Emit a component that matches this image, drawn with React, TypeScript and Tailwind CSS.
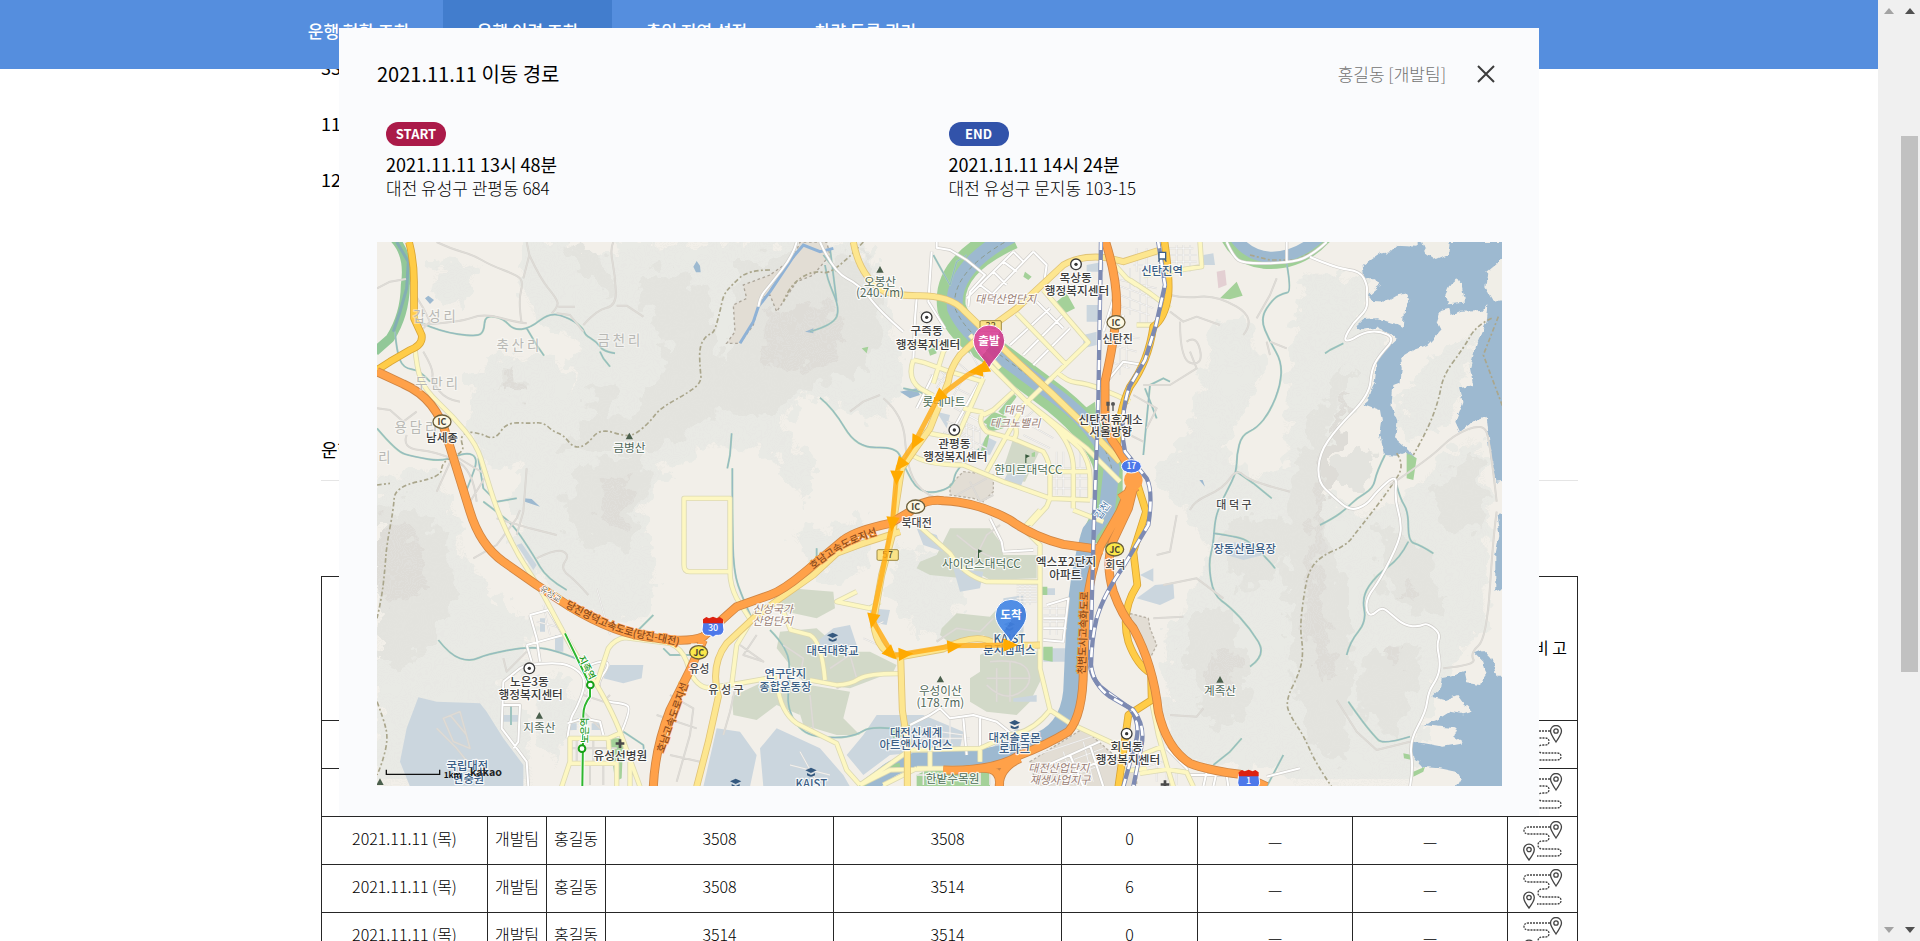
import React from "react";

type Pt = [number, number];

const ROADS: { kind: string; d: string[] }[] = [
  {
    kind: "lane",
    d: [
      "M21 160L60 140L108 132", "M200 21L240 40L310 60L360 90L440 120L460 140L445 200L455 265",
      "M460 130L478 60L470 21", "M478 60L510 130L560 190L565 215L545 235", "M565 215L615 215",
      "M140 270L270 262L340 235L440 262L470 265", "M560 235L600 240L640 290", "M640 270L680 225L740 212L735 120L720 40L730 21",
      "M740 212L770 212L820 245", "M21 520L60 525L100 560L140 530", "M110 600L95 640L200 650L310 700L320 800",
      "M160 350L190 400L185 440L230 495L270 500", "M130 170L160 220L180 260L150 290",
      "M200 770L250 660L350 720L300 800",
      "M470 700L460 830L440 900", "M310 970L380 930L440 850L450 825", "M380 850L480 880L560 900",
      "M500 970L560 940L600 960L570 1000L620 1040L655 1080",
      "M2400 180L2440 190L2540 180L2660 250L2620 300", "M2660 250L2700 180L2720 130",
      "M2400 230L2440 260L2480 245L2550 270", "M2430 260L2430 380L2500 390L2480 300L2450 320",
      "M2320 450L2400 450L2480 400L2460 350", "M2690 320L2700 360", "M2700 320L2750 340",
      "M2290 480L2360 520L2330 580", "M2280 600L2320 620",
      "M2460 825L2470 800L2560 760L2600 700L2640 740L2760 770",
      "M3060 750L3180 670L3250 600L3340 565L3360 620L3380 800",
      "M2360 960L2400 950L2420 840", "M2380 1050L2480 1030L2560 1090",
      "M2350 1150L2440 1145", "M3380 830L3370 900L3350 1210L3300 1255L3320 1290L3220 1300",
      "M2900 1395L2960 1490L3020 1545L3120 1520", "M2400 1440L2480 1445L2500 1420",
      "M900 1380L970 1420L960 1500L920 1640", "M860 1440L980 1480", "M900 1560L990 1580",
      "M1100 1340L1080 1430L1060 1500", "M1110 1230L1180 1280L1120 1260L1160 1200",
      "M1240 1230L1300 1270L1290 1330", "M1380 1300L1440 1260L1460 1330L1400 1360", "M1320 1380L1330 1480",
      "M1700 1220L1760 1180L1830 1190L1870 1150", "M1860 1280L1960 1270L1990 1350L1900 1400L1850 1350",
      "M1880 1300L1880 1400", "M1920 1280L1920 1400", "M1850 1330L1980 1330",
      "M1760 900L1810 940L1850 960L1900 980", "M1800 1000L1850 900L1890 870",
      "M220 1450L270 1430L300 1540L250 1520ZM200 1480L260 1540L300 1590M240 1440L290 1500",
      "M400 1270L410 1310L470 1250", "M640 1380L700 1400L720 1380", "M640 1430L690 1480",
      "M600 1540H740M620 1510V1580M670 1510V1580M700 1590V1650M660 1590V1650",
      "M1540 490L1600 540L1610 690L1650 770L1700 790", "M1530 480L1480 500L1440 530",
      "M1800 740L1830 800L1870 780", "M1760 780L1850 730",
    ],
  },
  {
    kind: "fine",
    d: [
      "M1680 420L1800 480M1700 390L1740 440M1740 400L1700 460M1780 430L1740 500M1720 500L1830 560",
      "M1760 380L1840 450M1800 350L1840 420M1780 560L1820 580M1770 590L1810 610M1790 540L1850 570",
      "M1730 560L1830 590M1720 590L1780 620M1650 230L1720 330M1640 300H1720",
      "M2060 650V780M2080 650V780M2040 700H2160M2040 730H2160M2050 760H2160M2110 800V690M2130 650V790",
      "M1960 600L2040 640M1980 570L2050 610M1940 570L2000 520", "M2230 130L2360 160M2240 150L2350 190M2250 180L2350 220M2240 210L2340 240M2280 100V240M2310 100V260M2330 110V270",
      "M2230 300L2310 310M2220 330L2300 350M2220 380L2280 400M2270 300V400M2250 300V420",
      "M2390 40H2470M2400 60H2480M2400 80H2480M2420 30V110M2440 30V110M2460 30V110M2290 60H2370M2290 90H2380M2300 40V110M2330 40V110",
      "M1940 1050H2000M1940 1060H2000M1940 1070H2000M1940 1080H2000M1940 1090H2000M1940 1100H2000M1950 1050V1110M1965 1050V1110M1980 1050V1110",
      "M2020 1120H2090M2020 1140H2090M2020 1160H2090M2020 1180H2090M2040 1110V1200M2060 1110V1200",
      "M1480 1210L1570 1250M1500 1180L1540 1160M1770 600L1850 640M1760 620L1830 650M1790 560V640M1810 570V650M1830 580V660",
      "M680 1060L720 1200M690 1180H760M500 1160L580 1180M520 1110L540 1200M640 1340L660 1400M2000 1560L2180 1500M2040 1600L2200 1540M2060 1640L2220 1580M2080 1550L2110 1650M2140 1520L2170 1640",
      "M2390 1590V1640M2420 1610V1650M2360 1560V1640M2310 1600L2380 1580",
      "M1700 1470V1540M1740 1450V1540M1640 1480L1780 1500M1640 1510H1800M1260 1590L1380 1620M1290 1550L1340 1640",
      "M1640 1600H1700M1640 1620H1700M1660 1600V1650M1830 1600V1650M1860 1600V1650",
    ],
  },
  {
    kind: "white",
    d: [
      "M2570 21L2590 65L2620 86L2750 84L2820 66L2870 21", "M2750 21V85", "M2690 1625L2790 1600",
      "M2820 66L2900 100L2970 108L2992 150L2990 180L2993 222L2950 262L2920 315L2940 318L2980 292L3030 288L3075 310L3030 360L3005 400L2998 480L2900 580L2848 655L2843 740L2890 785L2940 828L2990 810L3020 770L3082 715L3074 790L3094 860L3090 915L3030 1035L2992 1085L2988 1125L3003 1145L3035 1115L3060 1135L3104 1172L3150 1175L3170 1163L3212 1195L3200 1230L3211 1280L3205 1325L3175 1370L3168 1430L3118 1520L3130 1600L3120 1655",
      "M1700 21V38L1740 45L1790 75L1845 120L1800 170L1795 215", "M1685 50L1675 200L1725 280",
      "M1280 21L1270 60L1200 150L1170 185L1165 215", "M1350 21L1390 110L1470 150L1530 230L1600 290",
      "M1640 190L1635 250L1630 375", "M1930 50L1790 190", "M1990 50L1860 185", "M1930 50L1960 80",
      "M1900 80L1940 110M1870 110L1910 150M1830 150L1870 180M1990 50L2030 90L2020 160",
      "M2080 240L1960 360M2040 220L1920 330M2100 280L1990 390M2000 200L2080 280",
      "M1690 420L1640 520M1840 420L1740 600", "M2210 440L2260 380L2320 390",
      "M2030 1110L2095 1090L2080 1220L2020 1215M2020 1150H2090M2020 1180H2085",
      "M1860 850L1895 920L1900 950L1990 945", "M480 1140L535 1125L580 1200L640 1300M480 1140L500 1210L510 1280M470 1230L580 1200M470 1230L485 1280",
      "M475 1290L560 1280L620 1300L650 1340L620 1420L600 1450L592 1510", "M400 1340L395 1480L470 1580L475 1655M400 1340L450 1300L480 1285M395 1410H450L445 1520L430 1540",
      "M592 1465L640 1450L690 1460L700 1500", "M660 1290L700 1275L720 1290L680 1345L700 1400L760 1405L785 1420L755 1490",
      "M1620 1470L1680 1440L1710 1420L1740 1450L1810 1440L1880 1460L1930 1500M1780 1450L1790 1560M1830 1450L1830 1540",
      "M2390 1540L2450 1600L2460 1640M2450 1620H2600M2510 1610L2500 1655M2540 1610L2530 1655M2570 1620L2575 1655",
      "M2010 1600L2190 1520M2030 1650L2230 1560M2100 1560L2140 1655M2160 1530L2200 1655", "M2240 160L2200 290M2260 240L2220 330",
    ],
  },
  {
    kind: "pale",
    d: [
      "M134 330L140 400L165 465L250 545L320 630L345 710L380 825L440 955L510 1060L560 1155L620 1265L680 1345L740 1460L775 1560L810 1655",
      "M1080 1010H958Q942 1010 942 990V790H1080V1010Q1080 1050 1100 1090L1145 1160",
      "M680 1345L715 1240Q735 1212 765 1208L900 1225Q935 1240 950 1280Q970 1350 1010 1358L1080 1350L1220 1325",
      "M575 1655L600 1580V1510H715L755 1492M600 1585H740V1655M715 1510L720 1585M780 1580V1655",
      "M1085 1350L1100 1230L1160 1130", "M1222 1345Q1230 1430 1280 1465L1400 1525L1430 1605L1470 1650",
      "M1230 1105L1262 1185L1320 1200Q1355 1220 1365 1335M1320 1335L1400 1350Q1440 1350 1470 1330Q1500 1315 1590 1316",
      "M1650 875L1740 955Q1780 1020 1850 1040L2010 1041",
      "M2010 825L1960 880L2010 930V1300L2040 1425Q1990 1490 1920 1500L1830 1540L1620 1545L1470 1650",
      "M2040 1425L2100 1465L2240 1530", "M1470 1650L1560 1605L1700 1600", "M1680 1550V1600M1830 1540V1580M1640 1600H1900",
      "M1640 1600L1540 1650", "M1940 235L2090 390M2020 165L2155 322L1960 512L1850 710",
      "M1630 375L1660 382L1740 410L1840 440M1630 375Q1610 430 1650 460L1690 482M1690 445L1720 350L1740 325L1630 330",
      "M1850 380L1970 500L2060 580Q2110 640 2110 700V820M2040 560L2130 640Q2160 680 2160 730V790",
      "M1780 520L1840 532M1840 530Q1820 560 1850 590L1930 612Q1945 600 1935 570M1840 540L1870 525L1930 470M1930 612L2020 650Q2040 680 2040 720V790L2160 795M2040 710H2160",
      "M1650 590L1760 610L1840 430M1620 655Q1660 690 1780 690L1900 740L2040 790L2030 815L1980 870",
      "M2060 410L2090 440L2150 445L2240 480L2280 500", "M2280 135L2340 175L2400 220M2490 21L2495 95L2320 122",
      "M2230 85L2270 130L2300 150M2300 270H2350", "M2345 1400L2365 1500L2390 1590L2410 1655",
      "M2310 1615L2390 1603L2450 1612L2470 1655M2300 1565L2375 1535M2250 1610L2330 1600",
      "M1970 500L2150 640L2250 740M1890 400L1800 300", "M1460 1070L1400 1100L1500 1120L1530 1100", "M2110 825L2200 860",
    ],
  },
  {
    kind: "light",
    d: [
      "M1450 21Q1470 130 1545 170Q1580 182 1640 182Q1740 180 1780 225L1920 360L2045 475L2165 590L2250 680",
      "M2370 45L2260 80L2210 68Q2130 60 2080 90L1940 220L1850 285L1770 360Q1740 400 1735 440L1680 580L1630 650L1595 700L1575 830L1570 890L1535 1020L1510 1160Q1520 1260 1595 1265L1720 1242Q1800 1200 1850 1215Q1890 1235 2010 1230",
      "M980 1655L1015 1520L1045 1385Q1020 1290 1070 1225L1150 1150L1230 1090L1330 1020L1400 955L1480 925L1590 890",
      "M1592 1265L1597 1425L1612 1525V1655",
    ],
  },
  {
    kind: "gold",
    d: [
      "M117 21Q133 80 132 150V250L155 300Q160 330 120 345L60 380L21 405",
      "M2382 10Q2400 130 2395 180Q2385 250 2350 275Q2335 380 2280 455Q2245 530 2240 640",
      "M2300 740L2328 830L2290 950L2302 1050Q2250 1130 2275 1220Q2300 1290 2343 1315L2345 1395L2275 1440L2255 1585L2245 1655",
    ],
  },
  {
    kind: "highway",
    d: [
      "M21 410L100 447Q200 490 232 610L300 830Q330 930 400 980L500 1050L600 1115Q740 1200 850 1208Q950 1225 1000 1205Q1060 1150 1100 1115L1200 1080Q1240 1065 1300 1015L1420 915Q1460 885 1560 865L1620 830Q1660 790 1720 797Q1820 800 1920 855Q1990 905 2080 928L2200 945",
      "M2205 15Q2242 130 2240 220Q2235 310 2205 440V540Q2210 600 2240 635L2295 725Q2275 770 2250 830L2190 935Q2160 1020 2152 1100L2140 1300Q2140 1440 2095 1490Q2030 1530 1950 1560Q1870 1610 1720 1605",
      "M2295 740L2275 820L2228 920Q2205 990 2230 1070Q2255 1140 2290 1180Q2350 1290 2365 1430Q2390 1540 2460 1585Q2510 1605 2610 1618L2690 1655",
      "M2250 790L2300 755M1000 1215L960 1305L900 1425Q855 1540 850 1655",
      "M1840 1600Q1895 1600 1888 1655M1950 1570Q1885 1600 1888 1655",
    ],
  },
];

const ROAD_STYLE: Record<string, [string, number, string, number]> = {
  lane: ["#d6d4cf", 6, "#dedbd6", 4],
  fine: ["#d9d7d3", 5, "#ffffff", 2],
  white: ["#cfcdc9", 10, "#ffffff", 6],
  pale: ["#dcd9b4", 16, "#fdf7c2", 11],
  light: ["#e0c478", 21, "#fde68f", 16],
  gold: ["#d9a536", 23, "#ffcc47", 18],
  highway: ["#cf8544", 27, "#ffa149", 22],
};

const HILLS_LOW = [
  "M480 21L560 21L700 60L860 21L1480 21L1540 120L1600 420L1550 560L1300 480L1240 560L1340 700L1300 800L1180 640L1000 640L880 700L820 830L860 1020L820 1160L700 1150L560 1080L460 960L430 800L460 700L340 690L300 540L300 430L380 360L560 370L620 470L600 380L640 330L500 260L440 140Z",
  "M200 80L320 90L310 140L270 220L180 170Z",
  "M21 720L200 700L260 830L290 960L380 1080L480 1150L470 1300L380 1360L480 1480L490 1655L21 1655Z",
  "M2800 110L2990 130L2960 240L3060 330L2990 480L2850 660L2850 760L2960 830L3080 800L3300 600L3330 620L3360 830L3340 1180L3250 1290L3180 1400L3120 1655L2780 1655L2720 1600L2440 1580L2390 1440L2380 1200L2440 1120L2520 960L2450 840L2350 720L2440 640L2540 260L2640 260L2680 420L2560 640L2640 720L2760 700L2740 560Z",
  "M3100 480L3180 380L3320 280L3290 460L3240 560L3120 620L3080 540Z",
  "M1260 900L1480 850L1500 1000L1380 1060ZM1600 920L1700 960L1780 1080L1740 1200L1620 1200L1560 1050Z",
  "M660 1460L580 1500L560 1600L500 1500L500 1320L560 1300Z",
];
const HILLS_MID = [
  "M1100 70L1500 60L1540 260L1480 420L1360 440L1180 540L1040 520L1080 350Z",
  "M860 90L1000 150L1040 330L1100 460L1000 560L840 660L640 640L560 640L640 560L820 520L900 360L800 160Z",
  "M640 690L820 640L830 760L760 940L620 920L580 800Z",
  "M580 21L660 40L730 130L700 170L620 100ZM370 450L400 400L480 450L460 490ZM640 460L720 460L740 560L680 560Z",
  "M21 840L110 800L200 880L260 1060L200 1200L110 1300L21 1260Z",
  "M2890 430L2940 400L2900 520L2860 600L2850 800L2900 1000L2960 1300L2900 1600L2820 1500L2760 1280L2740 960L2780 700L2820 560Z",
  "M2480 1140L2560 1100L2640 1300L2620 1450L2540 1480L2440 1300Z",
  "M2560 850L2760 860L2720 1040L2600 1050L2560 950Z",
  "M3020 880L3160 920L3220 1120L3120 1140L3040 1040ZM2980 1260L3140 1220L3160 1320L3060 1500L2960 1400Z",
  "M2860 700L2990 620L3020 700L2960 780ZM3190 760L3320 640L3340 900L3220 880Z",
];
const HILLS_HIGH = [
  "M1200 220L1380 200L1440 330L1280 420L1160 380ZM700 740L780 740L760 860L680 860ZM390 440L440 410L470 480L420 480Z",
  "M2910 500L2940 470L2860 840L2860 1100L2900 1280L2860 1340L2800 1200L2820 900L2840 700Z",
  "M2520 1230L2600 1260L2580 1400L2520 1360ZM3040 1240L3100 1240L3080 1300Z",
  "M21 880L90 860L180 960L160 1080L60 1100L21 1060ZM3080 1080L3140 1040L3150 1090Z",
];
const STREAMS = [
  "M150 262L210 290L320 305L342 290L345 240L400 250L430 285L480 280L540 232L600 250L640 280L645 300L680 320L700 350L735 355",
  "M470 280L500 330L522 362", "M690 350L700 370L720 395", "M75 290L80 350L100 400L150 405L180 440",
  "M21 580L80 650L130 665L220 680L290 650L325 670L300 740L280 790", "M325 670L340 760L380 800L440 790",
  "M340 800L380 830L430 870L490 960L530 1030L590 1065", "M205 1215L240 1260L300 1280L350 1258L470 1235L560 1245L640 1280",
  "M1085 595L1080 660L1072 700", "M1087 700L1087 830L1090 1010L1120 1095L1150 1160", "M1400 110L1360 60",
  "M1365 90L1370 130L1410 220L1390 270L1320 290", "M1350 488L1390 520L1460 640L1580 635L1600 690L1650 780L1750 760L1755 700L1830 640",
  "M1200 1185L1255 1240L1260 1330L1250 1420L1300 1500L1400 1510L1460 1500L1500 1475L1560 1480",
  "M2750 85L2765 170L2740 175L2710 190L2670 250L2700 320L2735 380L2732 450L2700 530L2660 580L2615 600L2600 660L2600 710L2570 770L2555 800L2535 850L2530 930L2515 985L2530 1080L2580 1115L2640 1180L2690 1260L2640 1295",
  "M2600 710L2650 745L2705 790", "M2530 895L2600 905L2640 920L2700 980L2715 1000", "M2865 355L2880 345L2920 325",
  "M3045 660L3020 710L3010 760L2960 790L2930 820L2890 850L2850 870", "M3080 750L3090 790L3115 830L3115 920L3150 930L3190 955",
  "M3115 920L3090 970L3020 1020L2975 1085L2990 1160L2940 1220L2930 1260", "M2935 1400L2970 1450L3010 1500L3040 1530L3120 1505",
  "M2530 1590L2580 1550L2615 1510", "M2320 660L2340 450L2380 430L2400 440M2325 460L2360 550", "M790 1200L850 1140", "M1340 940V1000", "M2690 1655L2740 1560",
  "M760 1490L820 1530L825 1580", "M423 1410V1470M880 1240L900 1260H960", "M1600 460L1650 470L1680 490M1400 200L1380 40",
  "M1690 60L1740 150L1760 80L1790 60",
];
const BOUNDARIES = [
  "M1480 21L1390 120L1330 105L1260 150L1240 200",
  "M1200 105L1135 105L1085 150L1060 180L1050 230L1032 295L1010 300L988 335L990 400L995 440L960 470L870 520L840 560L800 595L770 605L690 580L650 630L612 640L580 600L550 590L520 562L480 565L410 562L375 615L330 595L290 590L270 610L285 650L215 680L215 725L75 755L70 825L50 930L45 1000L35 1090L21 1150",
  "M21 1400L40 1450L55 1510L35 1590L21 1620", "M21 750L60 745",
  "M2640 60L2700 75L2780 75L2850 40", "M3365 250L3320 270L3280 340L3220 420L3205 500L3170 590L3130 660",
  "M3385 245L3340 360L3400 520", "M3080 655L3105 690L3060 760L3000 840L2960 890L2930 930L2850 965L2815 1010L2800 1090L2790 1180L2800 1250L2790 1310L2745 1400L2765 1450L2800 1500L2840 1590L2885 1655",
];
const INSTITUTES = [
  "M145 1387L200 1400L330 1405L350 1430L400 1510L460 1590V1655H120L90 1580L110 1480Z",
  "M1390 1180L1440 1170L1460 1230L1380 1260L1340 1220ZM1500 1120L1560 1125L1550 1170L1500 1160ZM1040 1480L1110 1490L1160 1560L1140 1655H1000Z",
  "M1220 1480L1350 1540L1420 1620L1440 1655H1180L1170 1540ZM1480 1500L1520 1440L1660 1440L1780 1490L1770 1540L1560 1560L1480 1620L1430 1560Z",
  "M1750 1000L1840 1010L1830 1060L1770 1070ZM1900 1090L1960 1080V1190L1900 1200ZM2020 1240H2090V1280H2020ZM2030 1060H2055V1080H2030Z",
  "M2355 1050L2410 1045L2413 1090L2370 1110L2300 1090ZM1930 1390L2000 1380V1400H1930ZM700 1330L720 1290L820 1290L815 1330L760 1345Z",
  "M2140 300L2180 290V330L2140 340ZM2150 210H2190V260H2150ZM2500 60L2530 55L2535 90L2500 90ZM2150 90L2200 80V110H2150ZM510 1150H525V1190H510ZM555 1200H580V1250H555Z",
  "M400 1440H450V1460H400ZM600 1465H620V1485H600ZM665 1465H690V1485H665ZM1850 605L1880 620L1860 660L1820 650ZM1910 720L1970 710L1950 760L1900 740ZM1700 530L1740 540L1730 580Z",
  "M2560 925L2640 920L2680 960L2620 975L2570 960ZM440 930L455 925L500 990L490 1005ZM1640 880L1700 900L1720 950L1660 930ZM1850 1550L1980 1500L1940 1480ZM2310 1020L2350 1000V1040Z",
];
const PARKS = [
  "M1650 980L1700 960L1740 880L1860 880L1890 920L1900 960L2000 960V1030L1860 1035L1800 1000L1780 1030L1680 1020L1640 1000Z",
  "M1715 1180L1760 1135L1860 1145L1900 1100L1960 1110V1225H1880L1840 1200L1740 1225L1710 1200Z",
  "M1830 1260L1870 1240L2010 1250V1340L1980 1400L1940 1440L1850 1430L1800 1400L1800 1330L1830 1310Z",
  "M1220 1110L1260 1060L1390 1070L1395 1120L1340 1150L1250 1130ZM1230 1190L1340 1180L1420 1250L1500 1250L1580 1290L1570 1310L1440 1360L1300 1340L1220 1240Z",
  "M1085 1385L1180 1340L1270 1360L1290 1440L1220 1410L1160 1455L1090 1440Z", "M1930 610L2010 645L1965 740L1920 735L1900 700Z",
  "M1260 1340L1440 1370L1420 1450L1470 1500L1400 1500L1300 1470Z",
];
const GREENS = [
  "M2550 190L2600 140L2618 182L2580 193ZM2060 200L2090 175L2115 220L2085 235ZM1965 110L1985 125L1975 135L1960 125ZM2145 520L2175 500L2180 560L2150 545Z",
  "M1840 560L1870 530L1910 545L1900 580L1860 590ZM1860 590L1850 640L1830 655L1845 610ZM1885 530L1930 475L1940 485L1900 540Z",
  "M720 1510H760L755 1630L735 1640ZM1640 1620L1700 1590H1860V1655H1640ZM2020 1235H2048V1280L2020 1275ZM2015 1055H2032V1080H2015Z",
  "M3110 650L3140 670L3130 735L3110 730ZM3100 1555L3125 1560V1575L3102 1570ZM3130 1610L3165 1595L3160 1610L3130 1625ZM1475 340L1495 335L1490 355ZM1560 1480L1620 1470V1500L1570 1510Z",
  "M1675 345L1695 335L1700 355L1680 362ZM1985 655L1995 650V665H1985Z",
];
const LAKE =
  "M3140 21V35L3080 32L3060 50L3050 62L3035 50L3000 75L2978 90L2982 130L3015 130L3030 150L2995 180L3010 198L3050 200L3080 182L3112 175L3118 200L3102 225L3098 280L3070 265L3020 250L2980 252L2958 272L2970 285L3020 278L3070 300L3082 310L3050 340L3020 382L3015 440L3000 470L2994 495L2980 507L3030 525L3036 560L3030 600L3045 660L3080 662L3110 650L3132 668L3110 640L3075 610L3082 560L3064 515L3070 450L3092 442L3095 400L3090 370L3130 345L3172 330L3200 300L3212 285L3200 262L3212 225L3238 218L3242 242L3270 230L3340 228L3355 210L3350 260L3320 330L3300 400L3310 450L3270 460L3280 500L3256 560L3270 590L3310 562L3350 545L3360 640L3376 740L3430 735V21Z";
const LAKE_SE =
  "M3430 1325L3380 1325L3364 1270L3340 1245L3315 1255L3340 1280L3350 1320L3330 1350L3292 1345L3285 1310L3240 1325L3215 1330L3210 1362L3184 1385L3225 1395L3262 1380L3280 1405L3308 1430L3280 1438L3240 1430L3200 1455L3160 1470L3210 1475L3260 1480L3250 1505L3280 1525L3220 1535L3160 1525L3124 1520L3130 1565L3155 1595L3210 1600L3260 1610L3272 1630L3250 1670H3430ZM3430 835L3380 840L3388 900L3376 960V1070L3430 1050Z";

type Tone = "dark" | "peak" | "area" | "blue" | "zone" | "park" | "poi";
const TONE: Record<Tone, [string, number, string]> = {
  dark: ["#3c3c3c", 35, "500"],
  peak: ["#51685a", 35, "400"],
  area: ["#b9b9b5", 40, "400"],
  blue: ["#3c5f86", 34, "500"],
  zone: ["#9a7f76", 33, "400"],
  park: ["#4e6e56", 35, "400"],
  poi: ["#4a4a4a", 33, "500"],
};
const LABELS: [string, number, number, Tone][] = [
  ["갑 성 리", 193, 258, "area"], ["축 산 리", 444, 346, "area"], ["금 천 리", 747, 329, "area"],
  ["두 만 리", 200, 458, "area"], ["용 담 리", 138, 591, "area"], ["리", 43, 681, "area"],
  ["남세종", 216, 621, "dark"], ["금병산", 778, 652, "peak"],
  ["오봉산", 1530, 152, "peak"], ["(240.7m)", 1530, 187, "peak"],
  ["구즉동", 1670, 301, "dark"], ["행정복지센터", 1674, 341, "dark"],
  ["대덕산업단지", 1907, 203, "zone"], ["목상동", 2117, 141, "dark"], ["행정복지센터", 2121, 180, "dark"],
  ["신탄진역", 2376, 121, "blue"], ["신탄진", 2243, 324, "poi"],
  ["롯데마트", 1722, 514, "park"], ["대덕", 1932, 538, "zone"], ["테크노밸리", 1935, 575, "zone"],
  ["관평동", 1753, 639, "dark"], ["행정복지센터", 1756, 679, "dark"], ["한미르대덕CC", 1975, 718, "park"],
  ["신탄진휴게소", 2222, 566, "dark"], ["서울방향", 2222, 603, "dark"], ["대 덕 구", 2592, 823, "poi"],
  ["장동산림욕장", 2624, 955, "blue"], ["계족산", 2550, 1381, "peak"],
  ["북대전", 1640, 877, "poi"], ["사이언스대덕CC", 1834, 1000, "park"],
  ["엑스포2단지", 2088, 992, "dark"], ["아파트", 2086, 1031, "dark"], ["회덕", 2236, 1003, "poi"],
  ["대덕대학교", 1388, 1260, "blue"], ["신성국가", 1208, 1135, "zone"], ["산업단지", 1208, 1170, "zone"],
  ["연구단지", 1246, 1330, "blue"], ["종합운동장", 1246, 1367, "blue"],
  ["KAIST", 1918, 1223, "blue"], ["문지캠퍼스", 1918, 1257, "blue"],
  ["우성이산", 1711, 1380, "peak"], ["(178.7m)", 1711, 1415, "peak"],
  ["대전신세계", 1638, 1507, "blue"], ["아트앤사이언스", 1638, 1541, "blue"],
  ["대전솔로몬", 1934, 1522, "blue"], ["로파크", 1934, 1555, "blue"], ["한밭수목원", 1748, 1643, "park"],
  ["대전산업단지", 2066, 1610, "zone"], ["재생사업지구", 2070, 1646, "zone"],
  ["회덕동", 2270, 1549, "dark"], ["행정복지센터", 2274, 1588, "dark"],
  ["노은3동", 478, 1353, "dark"], ["행정복지센터", 482, 1392, "dark"], ["지족산", 508, 1490, "peak"],
  ["유성선병원", 751, 1574, "dark"], ["유 성 구", 1068, 1377, "poi"], ["유성", 988, 1313, "poi"],
  ["국립대전", 292, 1604, "blue"], ["현충원", 296, 1645, "blue"], ["KAIST", 1324, 1660, "blue"],
];
const PEAKS: Pt[] = [[778, 603], [1530, 103], [2550, 1333], [508, 1441], [1711, 1332], [30, 1640]];
const OFFICES: Pt[] = [[1670, 247], [2118, 88], [1753, 585], [478, 1300], [2270, 1496]];
const SCHOOLS: Pt[] = [[1388, 1205], [1323, 1610], [1934, 1467], [1918, 1172], [1097, 1643]];
const ROUTE: Pt[] = [[1840, 402], [1796, 418], [1706, 485], [1634, 622], [1585, 696], [1579, 730], [1567, 865], [1507, 1155], [1570, 1262], [1600, 1257], [1750, 1232], [1930, 1230]];
const ARROWS: [number, number, number][] = [
  [1818, 408, 172], [1836, 402, 150], [1706, 486, 138], [1636, 622, 118], [1590, 690, 128], [1580, 727, 92],
  [1567, 866, 96], [1508, 1156, 100], [1563, 1256, 45], [1606, 1257, -3], [1752, 1234, -5], [1920, 1230, 0],
];

/** Rounds the corners of an open polyline made of M and L commands; other paths pass through. */
function smooth(d: string): string {
  if (/[^ML\d\s.-]/.test(d) || d.lastIndexOf("M") > 0) return d;
  const pts = d.slice(1).split("L").map((p) => p.trim().split(/\s+/).map(Number));
  if (pts.length < 5) return d;
  let out = `M${pts[0].join(" ")}`;
  for (let i = 1; i < pts.length - 1; i++) {
    const end = i === pts.length - 2 ? pts[i + 1] : [(pts[i][0] + pts[i + 1][0]) / 2, (pts[i][1] + pts[i + 1][1]) / 2];
    out += `Q${pts[i].join(" ")} ${end.join(" ")}`;
  }
  return out;
}
const joined = (paths: string[]) => paths.map(smooth).join("");

function Label({ item }: { item: [string, number, number, Tone] }) {
  const [text, x, y, tone] = item;
  const [fill, size, weight] = TONE[tone];
  return (
    <text
      x={x} y={y} fill={fill} fontSize={size} fontWeight={weight} textAnchor="middle"
      fontStyle={tone === "zone" ? "italic" : "normal"} stroke="#ffffff" strokeOpacity={tone === "area" ? 0.4 : 0.85}
      strokeWidth="7" strokeLinejoin="round" paintOrder="stroke"
    >
      {text}
    </text>
  );
}

function Junction({ x, y, name, fill }: { x: number; y: number; name: string; fill: string }) {
  return (
    <g>
      <ellipse cx={x} cy={y} rx="27" ry="20" fill={fill} stroke="#6b5f3a" strokeWidth="4" />
      <text x={x} y={y + 10} fontSize="27" fontWeight="700" fill="#4a4433" textAnchor="middle">{name}</text>
    </g>
  );
}

function Shield({ x, y, name }: { x: number; y: number; name: string }) {
  return (
    <g transform={`translate(${x} ${y})`}>
      <path d="M-30 -18H30L33 8Q30 24 16 24H8L0 30L-8 24H-16Q-30 24 -33 8Z" fill="#4d78ea" stroke="#ffffff" strokeWidth="3" />
      <path d="M-30 -12V-24L-20 -31L-12 -27L0 -32L12 -27L20 -31L30 -24V-12Z" fill="#dd2211" />
      <text y="12" fontSize="27" fontWeight="500" fill="#ffffff" textAnchor="middle">{name}</text>
    </g>
  );
}

function Pin({ x, y, name, from, to, id }: { x: number; y: number; name: string; from: string; to: string; id: string }) {
  return (
    <g transform={`translate(${x} ${y})`}>
      <defs>
        <linearGradient id={id} x1="0" x2="1" y1="0" y2="1">
          <stop offset="0.5" stopColor={from} /><stop offset="0.5" stopColor={to} />
        </linearGradient>
      </defs>
      <path d="M0 0C-8 -26 -47 -48 -47 -84A47 47 0 1 1 47 -84C47 -48 8 -26 0 0Z" fill={`url(#${id})`} fillOpacity="0.94" stroke="#ffffff" strokeWidth="3" />
      <text y="-71" fontSize="35" fontWeight="700" fill="#ffffff" textAnchor="middle">{name}</text>
    </g>
  );
}

function RouteMap() {
  return (
    <svg viewBox="21 21 3375 1632" className="block h-auto w-full" role="img" aria-label="이동 경로 지도">
      <defs>
        <filter id="rough" x="0" y="0" width="100%" height="100%" filterUnits="userSpaceOnUse">
          <feTurbulence type="fractalNoise" baseFrequency="0.02" numOctaves="3" seed="4" result="n" />
          <feDisplacementMap in="SourceGraphic" in2="n" scale="110" xChannelSelector="R" yChannelSelector="G" />
        </filter>
        <filter id="contour" filterUnits="userSpaceOnUse" x="0" y="0" width="3420" height="1680">
          <feTurbulence type="fractalNoise" baseFrequency="0.006" numOctaves="4" seed="11" />
          <feColorMatrix values="0 0 0 0 0.78  0 0 0 0 0.78  0 0 0 0 0.75  2 0 0 0 -0.5" />
          <feComponentTransfer>
            <feFuncA type="discrete" tableValues="0 .5 0 0 .5 0 0 .5 0 0 .5 0 0 .5 0 0 .5 0 0 .5 0 0 .5 0 0 .5 0 0 .5 0 0 .5 0 0 .5 0 0 .5 0 0 .5 0 0 .5 0 0 .5 0" />
          </feComponentTransfer>
          <feGaussianBlur stdDeviation="1.5" />
          <feComposite operator="in" in2="SourceGraphic" />
        </filter>
        <filter id="shore" filterUnits="userSpaceOnUse" x="0" y="0" width="3460" height="1680">
          <feTurbulence type="fractalNoise" baseFrequency="0.05" numOctaves="2" seed="2" result="n" />
          <feDisplacementMap in="SourceGraphic" in2="n" scale="16" xChannelSelector="R" yChannelSelector="G" />
        </filter>
        <path id="way-dangjin" d="M585 1115Q740 1205 850 1215L930 1232" />
        <path id="way-honam" d="M1330 1005Q1420 925 1530 898" />
        <path id="way-honam-south" d="M880 1555L918 1450L960 1330" />
        <path id="way-river" d="M2145 1318L2150 1200L2155 1050" />
      </defs>
      <rect x="0" y="0" width="3420" height="1680" fill="#f2efe9" />
      <g filter="url(#rough)">
        <path d={HILLS_LOW.join("")} fill="#e9eae5" />
        <path d={HILLS_MID.join("")} fill="#e3e3de" />
        <path d={HILLS_HIGH.join("")} fill="#dedcd7" />
      </g>
      <path d={HILLS_LOW.join("")} filter="url(#contour)" opacity="0.7" />
      <path d={PARKS.join("")} fill="#d2d9c8" />
      <path d={INSTITUTES.join("")} fill="#cbd6de" />
      <path d="M1200 120L1120 150L1130 190L1090 210L1095 290L1070 325L1110 325L1150 270L1170 190L1200 180L1220 230L1280 140L1330 120L1380 60L1370 21H1290L1270 70Z" fill="#e2ddd4" stroke="#ada69a" strokeWidth="4" strokeDasharray="8 8" />
      <path d="M1740 750L1780 710L1870 720V770L1840 800L1810 790L1740 780ZM2280 1135L2335 1150L2340 1180L2360 1230L2335 1280L2290 1200ZM1980 1580L2140 1480L2300 1620V1655H2000Z" fill="#e2ddd4" stroke="#b9b2a6" strokeWidth="4" strokeDasharray="8 6" />
      <path d="M2540 110L2565 105L2570 150L2545 160Z" fill="#e3cfd2" />
      <path d={GREENS.join("")} fill="#a4d199" />

      <g fill="none" strokeLinejoin="round">
        <path d="M72 10Q120 60 106 150Q105 240 60 310L15 350" stroke="#92c898" strokeWidth="27" />
        <path d="M80 21L115 80L110 160L90 230L70 290" stroke="#84aeb4" strokeWidth="9" />
        <path d="M1925 0Q1725 90 1745 220Q1770 290 1860 345L2060 495Q2190 600 2215 700L2215 830L2170 920" stroke="#9fcf97" strokeWidth="86" />
        <path d="M1925 0Q1740 100 1755 220Q1785 290 1870 345L2060 485Q2200 590 2225 700L2210 830L2160 890Q2125 1000 2113 1160L2105 1340Q2105 1470 2010 1515Q1900 1570 1740 1570Q1600 1565 1540 1620L1480 1665" stroke="#9db9d0" strokeWidth="48" />
        <path d="M1590 1590Q1540 1600 1460 1665" stroke="#9fcf97" strokeWidth="14" />
        <path d="M2570 0Q2600 70 2680 80Q2790 90 2870 0" stroke="#9fcf97" strokeWidth="42" />
        <path d="M2590 0Q2630 62 2700 67Q2780 70 2855 0" stroke="#9db9d0" strokeWidth="34" />
        <path d="M1925 10Q1740 110 1755 220Q1785 290 1870 345L2060 485Q2200 590 2225 700" stroke="#8c9a8c" strokeWidth="3" strokeDasharray="14 10" />
      </g>
      <path d={LAKE + LAKE_SE} fill="#9db9d0" filter="url(#shore)" />
      <path d="M3150 10H3240L3235 60L3200 75L3170 55ZM3430 50L3388 80L3352 110L3346 160L3370 200L3430 190ZM3262 130L3275 150L3285 200L3235 205L3226 180L3240 150Z" fill="#f0eee7" filter="url(#shore)" />
      <path d="M970 95L980 78L990 92L992 112L978 112ZM165 190L175 182L192 195L180 207ZM462 790L485 792L510 815L465 800ZM1305 290L1330 280V295ZM2488 735L2498 735L2505 755ZM2680 965L2695 975L2715 1000ZM1590 470L1640 460L1650 480L1620 490Z" fill="#9db9d0" />
      <path d={joined(STREAMS)} fill="none" stroke="#a9d0ba" strokeWidth="6" strokeLinejoin="round" />
      <path d={joined(STREAMS)} fill="none" stroke="#93b7c4" strokeWidth="3" strokeLinejoin="round" />
      <path d="M1200 170L1270 65L1300 30L1350 50L1390 40M1110 325L1150 260L1165 215L1200 170" fill="none" stroke="#8fb2d6" strokeWidth="9" />
      <path d={joined(BOUNDARIES)} fill="none" stroke="#aaa68c" strokeWidth="5" strokeDasharray="14 7 6 7" />

      {ROADS.map(({ kind, d }) => {
        const [edge, outer, core, inner] = ROAD_STYLE[kind];
        const path = joined(d);
        return (
          <g key={kind} fill="none" strokeLinejoin="round">
            <path d={path} stroke={edge} strokeWidth={outer} />
            <path d={path} stroke={core} strokeWidth={inner} />
          </g>
        );
      })}
      <ellipse cx="2290" cy="735" rx="28" ry="30" fill="#ffa149" />
      <path d="M962 1225L1000 1228L985 1245Z" fill="#f2efe9" />

      <g fill="none" strokeLinejoin="round">
        {["M2193 15L2185 500L2172 860L2160 1290Q2165 1340 2210 1370L2280 1420Q2310 1460 2300 1510L2260 1655", "M2363 10L2385 150L2358 270L2325 375L2278 455Q2245 560 2265 650L2330 730Q2350 770 2335 870L2260 995Q2200 1080 2180 1150Q2165 1210 2163 1290Q2170 1350 2220 1385L2290 1425Q2325 1470 2315 1530L2290 1655"].map((d) => (
          <g key={d}>
            <path d={d} stroke="#7d8ab2" strokeWidth="13" />
            <path d={d} stroke="#ffffff" strokeWidth="8" strokeDasharray="30 30" />
          </g>
        ))}
        <path d="M585 1195L660 1350V1385Q640 1410 640 1440L637 1655" stroke="#ffffff" strokeWidth="11" />
        <path d="M585 1195L660 1350V1385Q640 1410 640 1440L637 1655" stroke="#2fb62f" strokeWidth="6" />
      </g>
      {[[661, 1350], [636, 1541]].map(([x, y]) => (
        <circle key={y} cx={x} cy={y} r="10" fill="#ffffff" stroke="#16a016" strokeWidth="6" />
      ))}

      {LABELS.map((item) => <Label key={`${item[0]}-${item[1]}-${item[2]}`} item={item} />)}

      <g fill="#8a4a1c" fontSize="30" fontWeight="500" stroke="#ffa149" strokeWidth="5" paintOrder="stroke">
        <text><textPath href="#way-dangjin">당진영덕고속도로(당진-대전)</textPath></text>
        <text><textPath href="#way-honam">호남고속도로지선</textPath></text>
        <text><textPath href="#way-honam-south">호남고속도로지선</textPath></text>
        <text><textPath href="#way-river">천변도시고속화도로</textPath></text>
      </g>
      <text transform="translate(508 1066) rotate(33)" fontSize="25" fill="#6f6657" stroke="#ffffff" strokeWidth="5" paintOrder="stroke">유성교</text>
      <text transform="translate(624 1268) rotate(62)" fontSize="28" fontWeight="500" fill="#1b9a1b" stroke="#ffffff" strokeWidth="6" paintOrder="stroke">지족역</text>
      <text transform="translate(653 1525) rotate(-90)" fontSize="28" fontWeight="500" fill="#1b9a1b" stroke="#ffffff" strokeWidth="6" paintOrder="stroke">노은역</text>
      <text transform="translate(2190 855) rotate(-55)" fontSize="30" fill="#4a78a8" stroke="#ffffff" strokeWidth="5" paintOrder="stroke">갑천</text>

      {PEAKS.map(([x, y]) => <path key={`${x}-${y}`} d={`M${x} ${y - 10}l11 20h-22Z`} fill="#4a5f4c" />)}
      {OFFICES.map(([x, y]) => (
        <g key={`${x}-${y}`}>
          <circle cx={x} cy={y} r="16" fill="#ffffff" stroke="#3a3a3a" strokeWidth="4" />
          <circle cx={x} cy={y} r="5" fill="#333333" />
        </g>
      ))}
      {SCHOOLS.map(([x, y]) => (
        <path key={`${x}-${y}`} d={`M${x - 17} ${y - 4}l17 -8l17 8l-17 8ZM${x - 12} ${y + 4}l12 6l12 -6v7q-12 8 -24 0Z`} fill="#35597f" />
      ))}
      <path d="M746 1513h8v9h9v7h-9v10h-8v-10h-9v-7h9ZM2381 1636h8v9h9v7h-9v10h-8v-10h-9v-7h9Z" fill="#4a4a4a" />
      <path d="M1966 658l14 5l-11 6v15h-3ZM1824 943l14 5l-11 6v15h-3Z" fill="#35593b" />
      <path d="M2211 500v12M2217 500v12M2214 500v28M2229 512v16" stroke="#555555" strokeWidth="4" />
      <circle cx="2229" cy="507" r="6" fill="#555555" />
      <path d="M2367 52h20v20h-20ZM2365 80l5 -8M2389 80l-5 -8" fill="#ffffff" stroke="#3f6187" strokeWidth="4" />

      <Junction x={216} y={560} name="IC" fill="#fdf8e4" />
      <Junction x={2238} y={262} name="IC" fill="#fdf8e4" />
      <Junction x={1637} y={815} name="IC" fill="#fdf8e4" />
      <Junction x={986} y={1252} name="JC" fill="#fbe84a" />
      <Junction x={2234} y={943} name="JC" fill="#fbe84a" />
      <ellipse cx="2284" cy="694" rx="30" ry="20" fill="#4d78ea" stroke="#ffffff" strokeWidth="3" />
      <text x="2284" y="703" fontSize="26" fontWeight="500" fill="#ffffff" textAnchor="middle">17</text>
      <Shield x={1029} y={1177} name="30" />
      <Shield x={2636} y={1636} name="1" />
      {[[1862, 273, "32"], [1553, 960, "57"]].map(([x, y, name]) => (
        <g key={name}>
          <rect x={Number(x) - 32} y={Number(y) - 16} width="64" height="32" rx="4" fill="#fbe387" stroke="#a08b45" strokeWidth="3" />
          <text x={x} y={Number(y) + 10} fontSize="27" fontWeight="500" fill="#5c4f26" textAnchor="middle">{name}</text>
        </g>
      ))}

      <Pin id="pin-start" x={1857} y={401} name="출발" from="#da4a9c" to="#cb3f8d" />
      <Pin id="pin-end" x={1923} y={1224} name="도착" from="#4a8ae6" to="#3f7ddc" />
      <polyline points={ROUTE.map((p) => p.join(",")).join(" ")} fill="none" stroke="#ffae1a" strokeOpacity="0.85" strokeWidth="15" strokeLinejoin="round" />
      {ARROWS.map(([x, y, a]) => (
        <path key={`${x}-${y}`} d="M24 0L-20 -20V20Z" transform={`translate(${x} ${y}) rotate(${a})`} fill="#ffaa00" />
      ))}

      <path d="M49 1604V1618H209V1604" fill="none" stroke="#111111" strokeWidth="4" />
      <text x="221" y="1628" fontSize="25" fontWeight="700" fill="#111111">1km</text>
      <text x="300" y="1624" fontSize="32" fontWeight="700" fill="#222222">kakao</text>
    </svg>
  );
}

function RouteIcon() {
  return (
    <svg viewBox="0 0 40 40" className="size-10" aria-hidden="true" fill="none" stroke="#444444" strokeWidth="1.3">
      <path d="M27 6H6Q1 6 1 9.500T6 13H22Q26 13 26 16.500T22 20H20Q15 20 15 24T20 28H34Q38 28 38 31.500T34 35H14" strokeDasharray="2 1" />
      <path d="M33 17Q27.500 9 27.500 6A5.500 5.500 0 0 1 38.500 6Q38.500 9 33 17Z" fill="#ffffff" />
      <circle cx="33" cy="6" r="2.200" />
      <path d="M6 39Q0.700 32 0.700 28.500A5.300 5.300 0 0 1 11.300 28.500Q11.300 32 6 39Z" fill="#ffffff" />
      <circle cx="6" cy="28.500" r="2.200" />
    </svg>
  );
}

const NAV = ["운행 현황 조회", "운행 이력 조회", "출입 지역 설정", "차량 등록 관리"];
const ROWS = [
  ["2021.11.11 (목)", "개발팀", "홍길동", "3500", "3504", "4"],
  ["2021.11.11 (목)", "개발팀", "홍길동", "3504", "3508", "4"],
  ["2021.11.11 (목)", "개발팀", "홍길동", "3508", "3508", "0"],
  ["2021.11.11 (목)", "개발팀", "홍길동", "3508", "3514", "6"],
  ["2021.11.11 (목)", "개발팀", "홍길동", "3514", "3514", "0"],
];
const HEADS = ["사용일자", "부서", "성명", "주행 전", "주행 후", "주행거리", "출퇴근용", "업무용"];

function Stop({ tag, color, time, place }: { tag: string; color: string; time: string; place: string }) {
  return (
    <div className="flex flex-1 flex-col items-start pl-[9px]">
      <span className={`flex h-6 w-15 items-center justify-center rounded-full text-[13px] font-bold text-white ${color}`}>{tag}</span>
      <p className="mt-1.5 text-lg leading-6 font-normal text-black">{time}</p>
      <p className="text-[17px] leading-6 font-light text-black">{place}</p>
    </div>
  );
}

function Scrollbar({ active }: { active: boolean }) {
  const tone = active ? "fill-[#505050]" : "fill-[#a3a3a3]";
  return (
    <div className="flex w-[21px] flex-col items-center bg-[#f0f0f0] py-2" aria-hidden="true">
      <svg viewBox="0 0 10 6" className={`h-1.5 w-2.5 ${tone}`}><path d="M5 0L10 6H0Z" /></svg>
      <div className="flex w-full flex-1 flex-col items-center">
        <div className="basis-[13.4%]" />
        {active && <div className="w-[17px] basis-[58.7%] bg-[#c1c1c1]" />}
      </div>
      <svg viewBox="0 0 10 6" className={`h-1.5 w-2.5 ${tone}`}><path d="M0 0H10L5 6Z" /></svg>
    </div>
  );
}

export default function App() {
  return (
    <div className="flex h-screen overflow-hidden bg-white font-['Noto_Sans_CJK_KR',sans-serif] text-black">
      <div className="relative min-w-0 flex-1 overflow-hidden">
        <header className="h-[69px] bg-[#558ede]">
          <nav className="mx-auto flex h-full max-w-[1330px]">
            {NAV.map((name, i) => (
              <a key={name} href="#" className={`flex w-[169px] items-center justify-center pb-2 text-[17px] font-medium text-white ${i === 1 ? "bg-[#427dcd]" : ""}`}>
                {name}
              </a>
            ))}
          </nav>
        </header>

        <main className="mx-auto max-w-[1330px] pr-[26px] pl-[47px]">
          <ul className="-mt-[30px] text-lg leading-[56px]">
            {["33", "11", "12"].map((n) => <li key={n} className="first:h-14 first:[clip-path:inset(30px_0_0_0)]">{n}</li>)}
          </ul>
          <h2 className="mt-[228px] border-b border-neutral-200 pb-[17px] text-lg leading-7 font-normal">운행 이력</h2>
          <table className="mt-[95px] w-full table-fixed border-collapse text-center text-base leading-6 font-light [&_td]:border [&_td]:border-neutral-800 [&_th]:border [&_th]:border-neutral-800">
            <colgroup>
              <col className="w-[166px]" /><col className="w-[59px]" /><col className="w-[59px]" />
              <col className="w-[228px]" /><col className="w-[228px]" /><col className="w-[136px]" />
              <col className="w-[155px]" /><col className="w-[155px]" /><col className="w-[70px]" />
            </colgroup>
            <thead>
              <tr className="h-36">
                {HEADS.map((h) => <th key={h} className="pb-1 font-normal">{h}</th>)}
                <th className="pb-1 pl-4 font-normal">비 고</th>
              </tr>
            </thead>
            <tbody>
              {ROWS.map((row, i) => (
                <tr key={i}>
                  {row.map((cell, j) => <td key={j} className="h-12 pb-1.5">{cell}</td>)}
                  <td>—</td>
                  <td>—</td>
                  <td>
                    <button type="button" aria-label="이동 경로 보기" className="flex w-full justify-center"><RouteIcon /></button>
                  </td>
                </tr>
              ))}
            </tbody>
          </table>
        </main>

        <div className="absolute inset-x-0 top-7 flex justify-center">
          <section role="dialog" aria-labelledby="route-title" className="w-[1200px] max-w-full bg-[#fafbfd] pt-7 pr-[37px] pb-[30px] pl-[38px]">
            <div className="flex items-center justify-between">
              <h1 id="route-title" className="text-xl leading-9 font-normal">2021.11.11 이동 경로</h1>
              <div className="flex items-center gap-6">
                <span className="text-[17px] font-light text-neutral-500">홍길동 [개발팀]</span>
                <button type="button" aria-label="닫기" className="flex size-8 items-center justify-center">
                  <svg viewBox="0 0 18 18" className="size-[18px]" fill="none" stroke="#3c3c3c" strokeWidth="2"><path d="M1 1L17 17M17 1L1 17" /></svg>
                </button>
              </div>
            </div>
            <div className="mt-[30px] flex">
              <Stop tag="START" color="bg-[#ab1a49]" time="2021.11.11 13시 48분" place="대전 유성구 관평동 684" />
              <Stop tag="END" color="bg-[#3253aa]" time="2021.11.11 14시 24분" place="대전 유성구 문지동 103-15" />
            </div>
            <div className="mt-[42px]"><RouteMap /></div>
          </section>
        </div>
      </div>
      <Scrollbar active={false} />
      <Scrollbar active />
    </div>
  );
}
